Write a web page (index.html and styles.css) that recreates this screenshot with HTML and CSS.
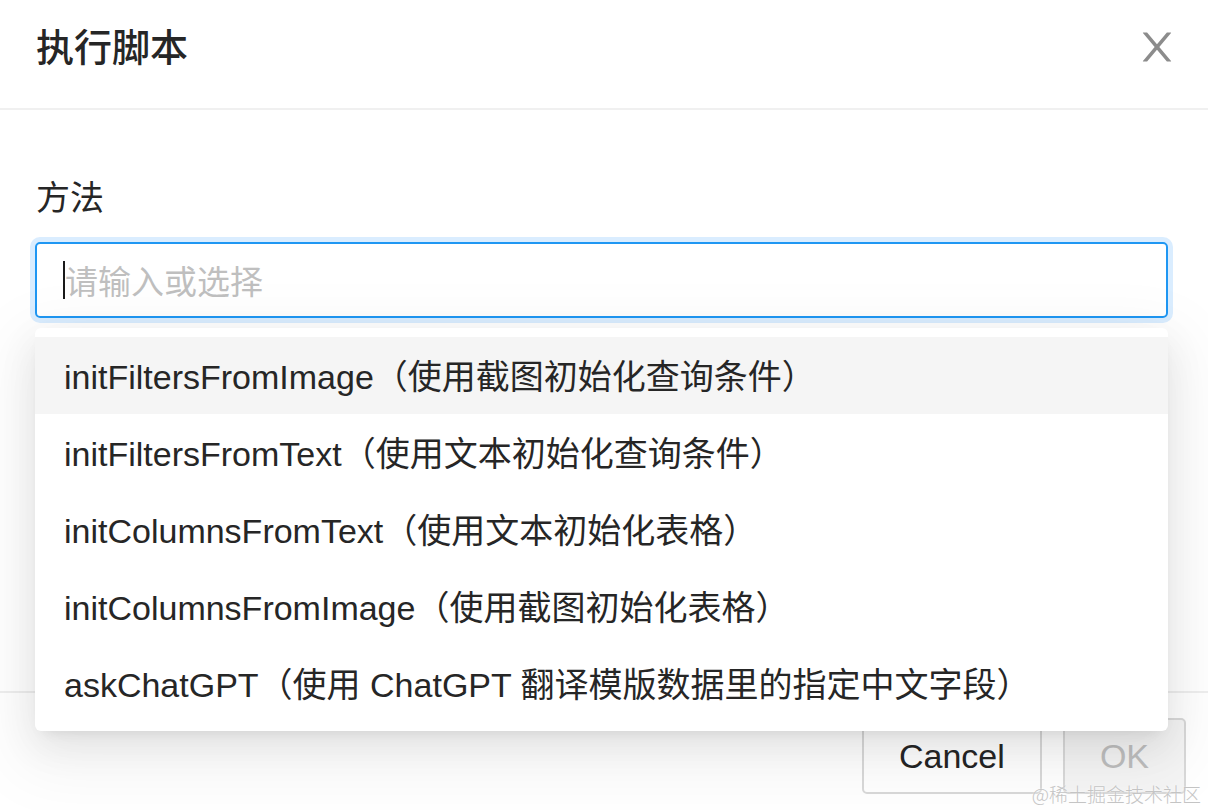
FILE: index.html
```html
<!DOCTYPE html>
<html lang="zh-CN">
<head>
<meta charset="utf-8">
<title>执行脚本</title>
<link rel="stylesheet" href="styles.css">
</head>
<body>
<div class="modal">
  <header class="modal-header">
    <h1 class="modal-title">执行脚本</h1>
    <button class="modal-close" aria-label="Close">
      <svg viewBox="64 64 896 896" width="40" height="40" fill="currentColor"><path d="M563.8 512l262.5-312.9c4.4-5.2.7-13.1-6.1-13.1h-79.8c-4.7 0-9.2 2.1-12.3 5.7L511.6 449.8 295.1 191.7c-3-3.6-7.5-5.7-12.3-5.7H203c-6.8 0-10.5 7.9-6.1 13.1L459.4 512 196.9 824.9A7.950 7.950 0 00203 838h79.8c4.7 0 9.2-2.1 12.3-5.7l216.5-258.1 216.5 258.1c3 3.6 7.5 5.7 12.3 5.7h79.8c6.8 0 10.5-7.900 6.1-13.1L563.8 512z"/></svg>
    </button>
  </header>
  <main class="modal-body">
    <div class="form-item">
      <label class="form-label">方法</label>
      <div class="select-wrap">
        <div class="input">
          <span class="caret"></span><span class="placeholder">请输入或选择</span>
        </div>
        <ul class="dropdown">
          <li class="option active">initFiltersFromImage（使用截图初始化查询条件）</li>
          <li class="option">initFiltersFromText（使用文本初始化查询条件）</li>
          <li class="option">initColumnsFromText（使用文本初始化表格）</li>
          <li class="option">initColumnsFromImage（使用截图初始化表格）</li>
          <li class="option">askChatGPT（使用 ChatGPT 翻译模版数据里的指定中文字段）</li>
        </ul>
      </div>
    </div>
  </main>
  <footer class="modal-footer">
    <button class="btn">Cancel</button>
    <button class="btn btn-disabled">OK</button>
  </footer>
</div>
<div class="watermark">@稀土掘金技术社区</div>
</body>
</html>
```

FILE: styles.css
```css
* { box-sizing: border-box; }
html, body {
  margin: 0;
  padding: 0;
  background: #fff;
  overflow: hidden;
}
body {
  width: 1208px;
  height: 810px;
  position: relative;
  font-family: "Liberation Sans", "Noto Sans CJK SC", sans-serif;
  color: #262626;
}
.modal {
  width: 1208px;
}
.modal-header {
  display: flex;
  justify-content: space-between;
  align-items: flex-start;
  padding: 19px 31px 37px 36px;
  border-bottom: 2px solid #f0f0f0;
}
.modal-title {
  margin: 0;
  font-size: 38px;
  line-height: 52px;
  font-weight: 500;
  color: #262626;
  font-family: "Noto Sans CJK SC", sans-serif;
}
.modal-close {
  margin-top: 8px;
  padding: 0;
  border: 0;
  background: none;
  color: #8c8c8c;
  width: 40px;
  height: 40px;
  display: block;
}
.modal-close svg { display: block; }
.modal-body {
  padding: 60px 40px 373px 35px;
}
.form-label {
  display: block;
  font-size: 34px;
  line-height: 52px;
  margin: 0 0 20px 1px;
  font-family: "Noto Sans CJK SC", sans-serif;
  color: #262626;
}
.select-wrap {
  position: relative;
}
.input {
  height: 76px;
  border: 2px solid #1f97f3;
  border-radius: 5px;
  box-shadow: 0 0 0 5px rgba(24, 144, 255, 0.16);
  padding: 0 26px;
  display: flex;
  align-items: center;
}
.caret {
  width: 2px;
  height: 38px;
  background: #1a1a1a;
}
.placeholder {
  font-size: 33px;
  color: #bfbfbf;
  font-family: "Noto Sans CJK SC", sans-serif;
  line-height: 52px;
}
.dropdown {
  position: absolute;
  left: 0;
  right: 0;
  top: 86px;
  margin: 0;
  padding: 9px 0;
  list-style: none;
  background: #fff;
  border-radius: 6px;
  box-shadow: 0 7px 14px -9px rgba(0, 0, 0, 0.12),
              0 14px 38px 0 rgba(0, 0, 0, 0.08),
              0 21px 66px 19px rgba(0, 0, 0, 0.05);
  z-index: 10;
}
.option {
  height: 77px;
  line-height: 80px;
  padding: 0 29px;
  font-size: 34px;
  color: #262626;
  white-space: nowrap;
}
.option.active {
  background: #f5f5f5;
}
.modal-footer {
  border-top: 2px solid #eeeeee;
  display: flex;
  justify-content: flex-end;
  gap: 21px;
  padding: 25px 22px 24px 0;
}
.btn {
  height: 76px;
  border: 2px solid #d9d9d9;
  border-radius: 5px;
  background: #fff;
  font-family: "Liberation Sans", "Noto Sans CJK SC", sans-serif;
  font-size: 34px;
  color: #262626;
  padding: 0 35px;
  min-width: 180px;
}
.btn-disabled {
  min-width: 122px;
  background: #f5f5f5;
  color: #bfbfbf;
}
.watermark {
  position: absolute;
  right: 7px;
  bottom: 4px;
  font-size: 19px;
  line-height: 24px;
  color: #c4c4c4;
  font-family: "Noto Sans CJK SC", sans-serif;
  font-weight: 300;
  text-shadow: 0 0 2px #fff;
  z-index: 20;
}
```
